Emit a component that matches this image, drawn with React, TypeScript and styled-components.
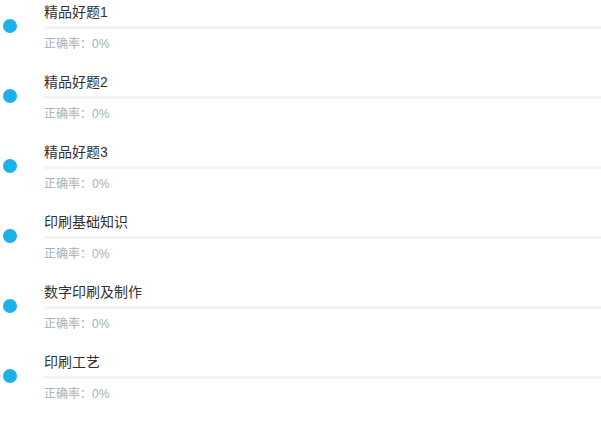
import React from 'react';
import styled, { createGlobalStyle } from 'styled-components';

const GlobalStyle = createGlobalStyle`
  html, body {
    margin: 0;
    padding: 0;
    background: #ffffff;
    font-family: "Liberation Sans", "Noto Sans CJK SC", sans-serif;
  }
`;

const List = styled.ul`
  list-style: none;
  margin: 0;
  padding: 0;
  width: 601px;
`;

const Item = styled.li`
  display: flex;
  align-items: flex-start;
  height: 70px;
`;

const DotColumn = styled.div`
  width: 44px;
  flex-shrink: 0;
  padding-top: 19px;
  padding-left: 3px;
  box-sizing: border-box;
`;

const Dot = styled.span`
  display: block;
  width: 14px;
  height: 14px;
  border-radius: 50%;
  background: #1db1ea;
`;

const Body = styled.div`
  flex: 1;
  display: flex;
  flex-direction: column;
  padding-top: 2px;
`;

const Title = styled.div`
  font-size: 14px;
  line-height: 20px;
  color: #333333;
`;

const Bar = styled.div`
  height: 3px;
  margin-top: 4px;
  background: #f4f4f4;
`;

const Rate = styled.div`
  margin-top: 7px;
  font-size: 12px;
  line-height: 16px;
  color: #aeaeae;
`;

const topics = ['精品好题1', '精品好题2', '精品好题3', '印刷基础知识', '数字印刷及制作', '印刷工艺'];

const App: React.FC = () => {
  return (
    <>
      <GlobalStyle />
      <List>
        {topics.map((name, index) => (
          <Item key={index}>
            <DotColumn>
              <Dot />
            </DotColumn>
            <Body>
              <Title>{name}</Title>
              <Bar />
              <Rate>正确率：0%</Rate>
            </Body>
          </Item>
        ))}
      </List>
    </>
  );
};

export default App;
